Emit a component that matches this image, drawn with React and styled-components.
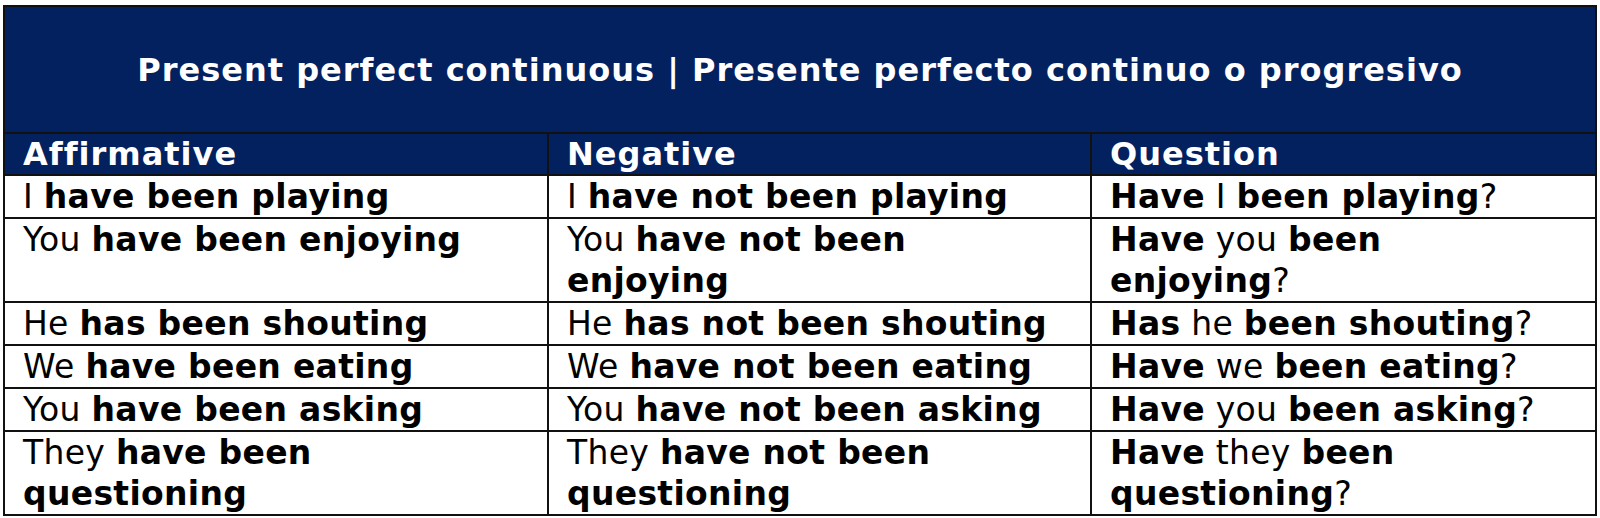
import React from 'react'
import styled, { createGlobalStyle } from 'styled-components'

// each cell: list of [text, bold]; "\n" marks the line break seen in the sheet
const rows = [
  [
    [['I ', false], ['have been playing', true]],
    [['I ', false], ['have not been playing', true]],
    [['Have', true], [' I ', false], ['been playing', true], ['?', false]],
  ],
  [
    [['You ', false], ['have been enjoying', true]],
    [['You ', false], ['have not been\nenjoying', true]],
    [['Have', true], [' you ', false], ['been\nenjoying', true], ['?', false]],
  ],
  [
    [['He ', false], ['has been shouting', true]],
    [['He ', false], ['has not been shouting', true]],
    [['Has', true], [' he ', false], ['been shouting', true], ['?', false]],
  ],
  [
    [['We ', false], ['have been eating', true]],
    [['We ', false], ['have not been eating', true]],
    [['Have', true], [' we ', false], ['been eating', true], ['?', false]],
  ],
  [
    [['You ', false], ['have been asking', true]],
    [['You ', false], ['have not been asking', true]],
    [['Have', true], [' you ', false], ['been asking', true], ['?', false]],
  ],
  [
    [['They ', false], ['have been\nquestioning', true]],
    [['They ', false], ['have not been\nquestioning', true]],
    [['Have', true], [' they ', false], ['been\nquestioning', true], ['?', false]],
  ],
]

export default function App() {
  return (
    <>
      <GlobalStyle />
      <Table>
        <colgroup>
          <col style={{ width: 544 }} />
          <col style={{ width: 543 }} />
          <col style={{ width: 505 }} />
        </colgroup>
        <thead>
          <tr>
            <Title colSpan={3}>Present perfect continuous | Presente perfecto continuo o progresivo</Title>
          </tr>
          <tr>
            <Head>Affirmative</Head>
            <Head>Negative</Head>
            <Head>Question</Head>
          </tr>
        </thead>
        <tbody>
          {rows.map((row, i) => (
            <tr key={i}>
              {row.map((cell, j) => (
                <Cell key={j}>
                  {cell.map(([text, bold], k) => (bold ? <b key={k}>{text}</b> : <span key={k}>{text}</span>))}
                </Cell>
              ))}
            </tr>
          ))}
        </tbody>
      </Table>
    </>
  )
}

const GlobalStyle = createGlobalStyle`
  body {
    margin: 0;
    background: #fff;
  }
`

const Table = styled.table`
  margin: 5px 0 0 3px;
  width: 1592px;
  table-layout: fixed;
  border-collapse: collapse;
  border: 2px solid #111;
  font-family: "DejaVu Sans", Verdana, sans-serif;
`

const Title = styled.th`
  height: 125px;
  padding: 0;
  background: #03215f;
  color: #fff;
  font-size: 32px;
  font-weight: bold;
  letter-spacing: 1px;
  text-align: center;
  border: 2px solid #111;
`

const Head = styled.th`
  height: 40px;
  padding: 0 18px;
  background: #03215f;
  color: #fff;
  font-size: 32px;
  font-weight: bold;
  letter-spacing: 1px;
  text-align: left;
  line-height: 40px;
  white-space: nowrap;
  border: 2px solid #111;
`

const Cell = styled.td`
  padding: 0 18px;
  color: #000;
  font-size: 33px;
  letter-spacing: 0.3px;
  line-height: 41px;
  text-align: left;
  vertical-align: top;
  white-space: pre;
  border: 2px solid #111;

  b {
    font-weight: bold;
  }
`
